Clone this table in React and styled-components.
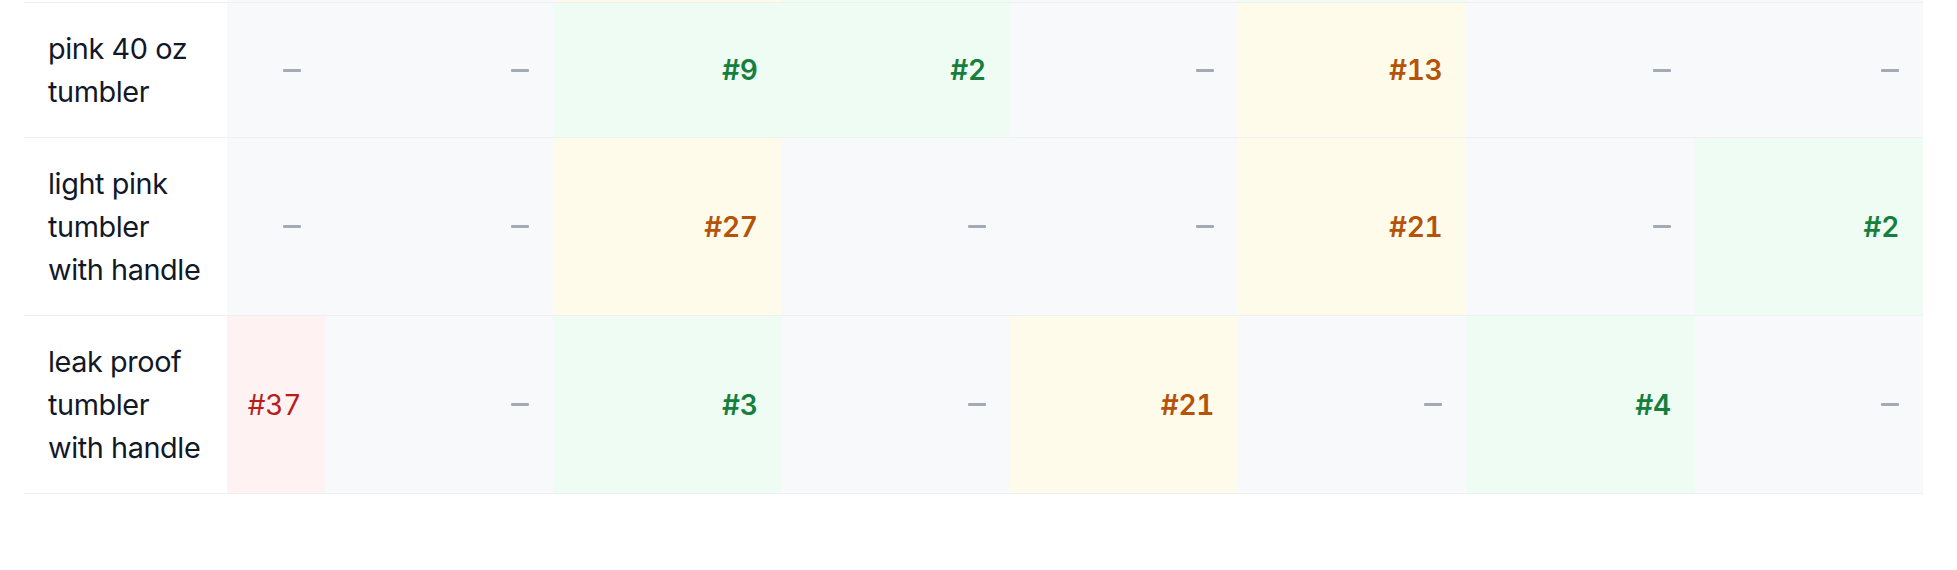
import styled, { createGlobalStyle } from "styled-components";

const GlobalStyle = createGlobalStyle`
  html, body {
    margin: 0;
    background: #ffffff;
  }
  body {
    font-family: Inter, "Noto Sans", sans-serif;
    color: #111827;
  }
`;

// Rank tone -> colours
const tones = {
  none: { bg: "#f8f9fb", fg: "#9ca3af" },
  good: { bg: "#effcf3", fg: "#15803d" },
  mid: { bg: "#fefbea", fg: "#b45309" },
  bad: { bg: "#fef2f2", fg: "#b91c1c" },
};

const toneFor = (rank) => {
  if (rank == null) return "none";
  if (rank <= 10) return "good";
  if (rank <= 30) return "mid";
  return "bad";
};

// the row above is scrolled out of view, only its last pixels show
const peekRow = [null, null, 25, 8, null, 6, null, null];

const rows = [
  { label: "pink 40 oz tumbler", ranks: [null, null, 9, 2, null, 13, null, null] },
  { label: "light pink tumbler with handle", ranks: [null, null, 27, null, null, 21, null, 2] },
  { label: "leak proof tumbler with handle", ranks: [37, null, 3, null, 21, null, 4, null] },
];

const App = () => (
  <>
    <GlobalStyle />
    <Page>
      <Table>
        <Row>
          <PeekLabel />
          {peekRow.map((r, i) => (
            <PeekCell key={i} $tone={toneFor(r)} />
          ))}
        </Row>
        {rows.map((row) => (
          <Row key={row.label}>
            <Label>{row.label}</Label>
            {row.ranks.map((r, i) => (
              <Cell key={i} $tone={toneFor(r)}>
                {r == null ? <Dash /> : <Rank $tone={toneFor(r)}>#{r}</Rank>}
              </Cell>
            ))}
          </Row>
        ))}
      </Table>
    </Page>
  </>
);

export default App;

const Page = styled.div`
  padding: 0 24px;
`;

const Table = styled.div`
  width: 1899px;
  display: flex;
  flex-direction: column;
`;

const Row = styled.div`
  display: grid;
  grid-template-columns: 203px 98px repeat(7, 1fr);
  border-bottom: 1px solid #eff0f2;
`;

const PeekLabel = styled.div`
  height: 2px;
  background: #ffffff;
`;

const PeekCell = styled.div`
  height: 2px;
  background: ${({ $tone }) => tones[$tone].bg};
`;

const Label = styled.div`
  padding: 24px 18px 24px 24px;
  font-size: 28.8px;
  line-height: 43px;
  letter-spacing: -0.4px;
  font-weight: 400;
  color: #111827;
  background: #ffffff;
`;

const Cell = styled.div`
  display: flex;
  align-items: center;
  justify-content: flex-end;
  padding: 0 24px;
  background: ${({ $tone }) => tones[$tone].bg};
`;

const Rank = styled.span`
  font-size: 28px;
  line-height: 1;
  font-weight: ${({ $tone }) => ($tone === "bad" ? 400 : 600)};
  letter-spacing: -0.3px;
  color: ${({ $tone }) => tones[$tone].fg};
  font-variant-numeric: tabular-nums;
`;

const Dash = styled.span`
  display: block;
  width: 18px;
  height: 3px;
  border-radius: 1px;
  background: #a3a9b5;
`;
